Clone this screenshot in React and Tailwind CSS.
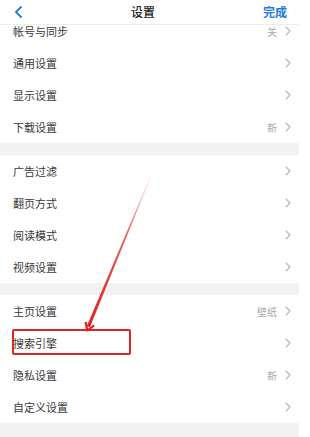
const sections = [
  [
    { label: "帐号与同步", value: "关" },
    { label: "通用设置" },
    { label: "显示设置" },
    { label: "下载设置", value: "新" },
  ],
  [
    { label: "广告过滤" },
    { label: "翻页方式" },
    { label: "阅读模式" },
    { label: "视频设置" },
  ],
  [
    { label: "主页设置", value: "壁纸" },
    { label: "搜索引擎" },
    { label: "隐私设置", value: "新" },
    { label: "自定义设置" },
  ],
];

function Chevron() {
  return (
    <svg width="6" height="10" viewBox="0 0 6 10" fill="none">
      <path d="M1 1l4 4-4 4" stroke="#b5b5b5" strokeWidth="1.1" strokeLinecap="round" strokeLinejoin="round" />
    </svg>
  );
}

function Row({ label, value }) {
  return (
    <div className="flex h-[32px] items-center justify-between pl-[13px] pr-[8px]">
      <span className="text-[11px] text-[#3a3a3a]">{label}</span>
      <div className="flex items-center gap-[8px]">
        {value && <span className="text-[10px] text-[#a8a8a8]">{value}</span>}
        <Chevron />
      </div>
    </div>
  );
}

function Arrow() {
  return (
    <svg className="pointer-events-none absolute left-0 top-0" width="310" height="437">
      <defs>
        <linearGradient id="fade" x1="153" y1="170" x2="88" y2="330" gradientUnits="userSpaceOnUse">
          <stop offset="0" stopColor="#e53935" stopOpacity="0" />
          <stop offset="0.4" stopColor="#e53935" stopOpacity="0.8" />
          <stop offset="1" stopColor="#e21d1d" />
        </linearGradient>
      </defs>
      <polygon points="153,170 153.6,170.3 89.9,327.2 86.9,326" fill="url(#fade)" />
      <polyline points="85.7,322.8 87.4,330.5 93.5,325.8" fill="none" stroke="#e21d1d" strokeWidth="2.2" strokeLinejoin="round" strokeLinecap="round" />
    </svg>
  );
}

export default function App() {
  return (
    <div
      className="relative h-[437px] w-[310px] overflow-hidden bg-white"
      style={{ fontFamily: '"Noto Sans CJK SC", "Noto Sans", sans-serif' }}
    >
      <div className="w-[299px]">
        <header className="relative z-10 flex h-[25px] items-center justify-between border-b border-[#ececec] bg-white pl-[14px] pr-[12px]">
          <svg width="9" height="12" viewBox="0 0 9 12" fill="none">
            <path d="M7 1L2 6l5 5" stroke="#1f7ae0" strokeWidth="1.8" strokeLinecap="round" strokeLinejoin="round" />
          </svg>
          <span className="text-[12px] font-medium text-[#222]">设置</span>
          <span className="text-[12px] font-semibold text-[#1f7ae0]">完成</span>
        </header>

        <div className="-mt-[10px]">
          {sections.map((rows, i) => (
            <div key={i}>
              {rows.map((r) => (
                <Row key={r.label} {...r} />
              ))}
              <div className="h-[12px] bg-[#f2f2f2]" />
            </div>
          ))}
          <div className="h-[20px] bg-[#f2f2f2]" />
        </div>
      </div>

      <div className="absolute left-[12px] top-[329px] h-[26px] w-[119px] rounded-[2px] border-2 border-[#e02424]" />
      <Arrow />
    </div>
  );
}
